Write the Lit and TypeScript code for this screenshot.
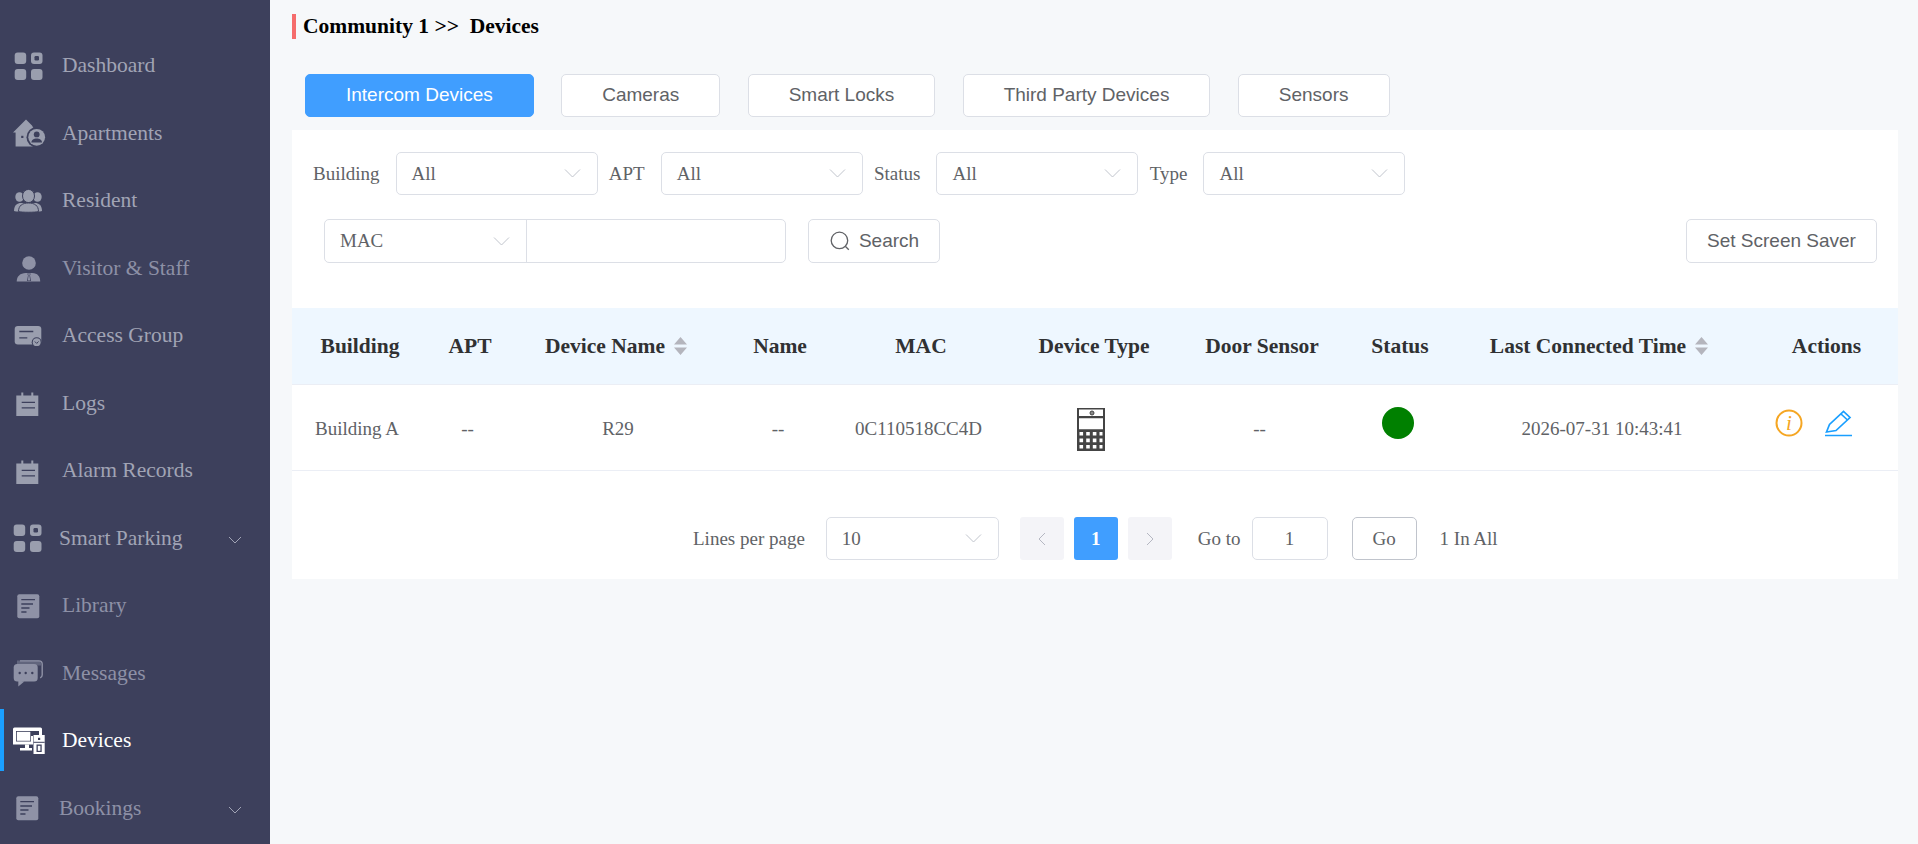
import {css, html, LitElement, svg} from 'lit';
import {customElement} from 'lit/decorators.js';

const BG = '#3d405c';

const grid = svg`<rect x="2.7" y="2.5" width="11.5" height="11.5" rx="3"/><rect x="19" y="2.5" width="11.5" height="11.5" rx="3"/><rect x="22.5" y="6" width="4.5" height="4.5" rx="1.2" fill="${BG}"/><rect x="2.7" y="19" width="11.5" height="11" rx="3"/><rect x="19" y="19" width="11.5" height="11" rx="3"/>`;
const doc = svg`<rect x="5.3" y="4.2" width="22" height="24" rx="2"/><g stroke="${BG}" stroke-width="1.3"><path d="M9.3 9.6H23M9.3 14H21M9.3 18H17.5M9.3 22H14.5"/></g>`;
const cal = svg`<path d="M4.3 8.5h5v-3h2v3h8v-3h2v3h5V29H4.3z"/><g stroke="${BG}" stroke-width="1.3" fill="none"><path d="M9.7 15.3H23M9.7 20.9H23"/></g>`;

const ICONS: Record<string, unknown> = {
    dashboard: grid,
    apartments: svg`<path d="M14 2.6 1 15.6h2.6v14H22V12l-2-3.5z"/><circle cx="24.7" cy="20.3" r="10.2" fill="${BG}"/><circle cx="24.7" cy="20.3" r="8.4"/><circle cx="24.7" cy="17.4" r="2.9" fill="${BG}"/><path d="M19.4 25.6c0-5.4 10.6-5.4 10.6 0z" fill="${BG}"/><rect x="9.2" y="18.8" width="2.2" height="2.2" fill="${BG}"/>`,
    resident: svg`<ellipse cx="7.5" cy="12" rx="4.2" ry="4.8"/><ellipse cx="25.5" cy="12" rx="4.2" ry="4.8"/><path d="M2 26c0-6 3.5-8 7-8h14c3.500 0 7 2 7 8-4 1.200-24 1.200-28 0z"/><ellipse cx="16.5" cy="11" rx="6" ry="6.600" stroke="${BG}"/><path d="M6.500 26.500c0-6 4-8.500 10-8.500s10 2.500 10 8.500c-3 1-17 1-20 0z" stroke="${BG}"/>`,
    visitor: svg`<circle cx="17" cy="11" r="6.800"/><path d="M4.700 29.500c0-5 3.500-8.500 9-8.500h6.500c5.300 0 8 3.500 8 8.500z"/><path d="M15.300 21.500h3.400l-.7 2 1 5.500h-4l1-5.500z" fill="${BG}"/><path d="M16.100 21.800h1.800l-.5 1.800.8 5h-2.400l.8-5z"/>`,
    access: svg`<rect x="2.700" y="5.900" width="26.600" height="18.600" rx="3.200"/><path d="M7.300 11.500h14M7.300 17.900h8" stroke="${BG}" stroke-width="1.300"/><circle cx="24.700" cy="22.200" r="5" fill="${BG}"/><circle cx="24.700" cy="22.200" r="3.900"/><path d="m22.800 21.500 1.900 1.900 1.900-1.900" stroke="${BG}" fill="none"/>`,
    logs: cal,
    parking: grid,
    library: doc,
    messages: svg`<path d="M8 3.900h19a3.200 3.200 0 0 1 3.200 3.200v11a3 3 0 0 1-2 2.800" fill="none" stroke="currentColor" stroke-width="1.400"/><path d="M5 3.500h21.500A3.500 3.500 0 0 1 29 6v2.500H5z" opacity=".45"/><rect x="1.700" y="6.900" width="24" height="17.700" rx="3.500"/><path d="M6.300 23.500v6.100l6-5.100z"/><circle cx="7.700" cy="16" r="1.200" fill="${BG}"/><circle cx="13.700" cy="16" r="1.200" fill="${BG}"/><circle cx="20.300" cy="16" r="1.200" fill="${BG}"/>`,
    devices: svg`<path fill-rule="evenodd" d="M2.500 2.500h26A1.500 1.500 0 0 1 30 4v7h-9v8.500H1V4a1.500 1.500 0 0 1 1.500-1.500zM4 6v10.500h15V11h8V6z"/><rect x="4.800" y="6.800" width="13.500" height="9" /><path d="M13 19.500h4V23h3v2.500H8V23h5z"/><rect x="21.500" y="10" width="11.200" height="19"/><rect x="26" y="12.800" width="2.200" height="2.200" fill="${BG}"/><path d="M21.500 17.300h11.200" stroke="${BG}"/><rect x="24.500" y="19.500" width="5.200" height="7.500" fill="${BG}"/><rect x="25.800" y="20.800" width="2.600" height="5"/>`,
    bookings: doc,
};

interface NavItem {
    id: string;
    label: string;
    tone: string;
    shift?: number;
    open?: boolean;
}

const NAV: NavItem[] = [
    {id: 'dashboard', label: 'Dashboard', tone: 'base'},
    {id: 'apartments', label: 'Apartments', tone: 'base'},
    {id: 'resident', label: 'Resident', tone: 'base'},
    {id: 'visitor', label: 'Visitor & Staff', tone: 'dim'},
    {id: 'access', label: 'Access Group', tone: 'base'},
    {id: 'logs', label: 'Logs', tone: 'base'},
    {id: 'logs', label: 'Alarm Records', tone: 'base'},
    {id: 'parking', label: 'Smart Parking', tone: 'base', shift: 1, open: true},
    {id: 'library', label: 'Library', tone: 'dim'},
    {id: 'messages', label: 'Messages', tone: 'dim'},
    {id: 'devices', label: 'Devices', tone: 'on'},
    {id: 'bookings', label: 'Bookings', tone: 'dim', shift: 1, open: true},
];

const TABS = ['Intercom Devices', 'Cameras', 'Smart Locks', 'Third Party Devices', 'Sensors'];
const FILTERS = ['Building', 'APT', 'Status', 'Type'];

const chevron = html`<svg class="chev" viewBox="0 0 17 9" width="17" height="9"><path d="M1 .5l7.500 7.500 7.500-7.500" fill="none" stroke="currentColor"/></svg>`;
const navChevron = html`<svg class="nchev" viewBox="0 0 14 8" width="14" height="8"><path d="M1 1l6 6 6-6" fill="none" stroke="currentColor"/></svg>`;
const sort = html`<svg class="sort" viewBox="0 0 13 18" width="13" height="18"><path d="M6.500 0 13 7.500H0zM6.500 18 0 10.500h13z" fill="#b4b5bd"/></svg>`;

@customElement('app-root')
export class AppRoot extends LitElement {
    static styles = css`
        :host {
            display: flex;
            height: 100vh;
            overflow: hidden;
            background: #f6f8fa;
            font-family: "Liberation Serif", serif;
            color: #606266;
        }

        .side {
            width: 270px;
            flex: none;
            background: #3d405c;
            padding-top: 32px;
            box-sizing: border-box;
        }

        .item {
            height: 67.5px;
            display: flex;
            align-items: center;
            padding-left: 12px;
            font-size: 21.5px;
            position: relative;
        }

        .item.base { color: #a1a4b5; }
        .item.dim { color: #8d90a6; }
        .item.on { color: #fff; }
        .item.shift { padding-left: 11px; }

        .item.on::before {
            content: '';
            position: absolute;
            left: 0;
            top: 2px;
            width: 4px;
            height: 62px;
            background: #1a9fff;
        }

        .item svg.ico {
            width: 36px;
            height: 32px;
            flex: none;
            margin-right: 14px;
            fill: currentColor;
        }

        .item.base svg.ico { color: #9a9eae; }
        .item.dim svg.ico { color: #8f92a6; }
        .item.shift svg.ico { margin-right: 12px; }

        .nchev {
            position: absolute;
            left: 228px;
            top: 31px;
            color: #a1a4b5;
        }

        main {
            flex: 1;
            padding: 14px 20px 0 22px;
            min-width: 0;
        }

        h1 {
            margin: 0;
            height: 25px;
            line-height: 25px;
            border-left: 4px solid #f56c6c;
            padding-left: 7px;
            font-size: 21.5px;
            font-weight: bold;
            color: #000;
            white-space: pre;
        }

        .tabs {
            display: flex;
            gap: 27.4px;
            margin: 35px 0 13px 13px;
        }

        .btn {
            height: 43px;
            box-sizing: border-box;
            display: flex;
            align-items: center;
            justify-content: center;
            border: 1px solid #dcdfe6;
            border-radius: 5px;
            background: #fff;
            font: 19px "Liberation Sans", sans-serif;
            color: #606266;
        }

        .btn.primary {
            background: #409eff;
            border-color: #409eff;
            color: #fff;
        }

        .tabs .btn { padding: 0 40px 2px; }

        .panel {
            background: #fff;
            height: 449px;
            padding-top: 22px;
            box-sizing: border-box;
        }

        .filters {
            display: flex;
            align-items: center;
            padding-left: 21px;
            font-size: 19px;
        }

        .filters label { margin-right: 16px; }
        .filters .select { margin-right: 11.300px; }

        .select {
            width: 202px;
            height: 43px;
            box-sizing: border-box;
            display: flex;
            align-items: center;
            justify-content: space-between;
            padding: 0 16px 0 15px;
            border: 1px solid #dcdfe6;
            border-radius: 5px;
            background: #fff;
            font-size: 19px;
            color: #606266;
        }

        .chev { color: #c0c4cc; flex: none; }

        .query {
            display: flex;
            align-items: center;
            padding: 0 21px 0 32px;
            margin-top: 24px;
        }

        .combo {
            display: flex;
            width: 462px;
            height: 44px;
            box-sizing: border-box;
            border: 1px solid #dcdfe6;
            border-radius: 5px;
        }

        .combo .select {
            height: 100%;
            border: 0;
            border-right: 1px solid #dcdfe6;
            border-radius: 0;
            background: none;
        }

        .query .btn { height: 44px; }
        .search { width: 132px; margin-left: 22px; gap: 8px; }
        .saver { width: 191px; margin-left: auto; }

        .row {
            display: grid;
            grid-template-columns: 136px 84px 212px 112px 170px 176px 160px 116px 282px 158px;
            align-items: center;
            justify-items: center;
            box-sizing: border-box;
            border-bottom: 1px solid #ebeef5;
        }

        .head {
            margin-top: 45px;
            height: 77px;
            background: #eef7ff;
            font-size: 21.5px;
            font-weight: bold;
            color: #303133;
        }

        .head span { display: flex; align-items: center; gap: 9px; }
        .head .actions { padding-left: 15px; }
        .head .dname { padding-right: 4px; }

        .body {
            height: 86px;
            font-size: 19px;
        }

        .body span { padding-top: 3px; }
        .body .l6 { margin-right: 6px; }
        .body .l5 { margin-right: 5px; }
        .body .l4 { margin-right: 4px; }
        .body .date { margin-left: 6px; }

        .dev { display: block; margin: 3px 7px 0 0; }
        .dot { width: 32px; height: 32px; border-radius: 50%; background: #008000; margin: 0 4px 9px 0; }
        .acts { display: flex; align-items: center; gap: 22px; margin-right: 12px; margin-bottom: 9px; }

        .pager {
            display: flex;
            align-items: center;
            margin: 46px 0 0 401px;
            font-size: 19px;
        }

        .pager .select { width: 173px; margin: 0 21px; }

        .page {
            width: 44px;
            height: 43px;
            display: flex;
            align-items: center;
            justify-content: center;
            background: #f4f4f8;
            border-radius: 3px;
            color: #b5b7c2;
            margin-right: 10px;
        }

        .page.cur { background: #409eff; color: #fff; font-weight: bold; }
        .goto-label { margin-left: 16px; }

        .goto {
            width: 76px;
            height: 43px;
            box-sizing: border-box;
            display: flex;
            align-items: center;
            justify-content: center;
            border: 1px solid #dcdfe6;
            border-radius: 5px;
            margin: 0 24px 0 11px;
        }

        .go {
            width: 65px;
            height: 43px;
            box-sizing: border-box;
            display: flex;
            align-items: center;
            justify-content: center;
            border: 1px solid #c0c4cc;
            border-radius: 5px;
            margin-right: 23px;
        }
    `;

    renderNav(n: NavItem) {
        return html`
            <div class="item ${n.tone} ${n.shift ? 'shift' : ''}">
                <svg class="ico" viewBox="0 0 36 32">${ICONS[n.id]}</svg>
                <span>${n.label}</span>
                ${n.open ? navChevron : ''}
            </div>
        `;
    }

    render() {
        return html`
            <aside class="side">${NAV.map((n) => this.renderNav(n))}</aside>
            <main>
                <h1>Community 1 &gt;&gt;  Devices</h1>
                <div class="tabs">
                    ${TABS.map((t, i) => html`<div class="btn ${i === 0 ? 'primary' : ''}">${t}</div>`)}
                </div>
                <section class="panel">
                    <div class="filters">
                        ${FILTERS.map((f) => html`
                            <label>${f}</label>
                            <div class="select"><span>All</span>${chevron}</div>
                        `)}
                    </div>
                    <div class="query">
                        <div class="combo">
                            <div class="select"><span>MAC</span>${chevron}</div>
                        </div>
                        <div class="btn search">
                            <svg viewBox="0 0 20 20" width="22" height="22"><circle cx="9.500" cy="9.500" r="7.500" fill="none" stroke="#606266" stroke-width="1.200"/><path d="m15 15 3 3" stroke="#606266" stroke-width="1.200"/></svg>
                            Search
                        </div>
                        <div class="btn saver">Set Screen Saver</div>
                    </div>
                    <div class="row head">
                        <span>Building</span>
                        <span>APT</span>
                        <span class="dname">Device Name ${sort}</span>
                        <span>Name</span>
                        <span>MAC</span>
                        <span>Device Type</span>
                        <span>Door Sensor</span>
                        <span>Status</span>
                        <span>Last Connected Time ${sort}</span>
                        <span class="actions">Actions</span>
                    </div>
                    <div class="row body">
                        <span class="l6">Building A</span>
                        <span class="l5">--</span>
                        <span>R29</span>
                        <span class="l4">--</span>
                        <span class="l5">0C110518CC4D</span>
                        <svg class="dev" viewBox="0 0 28 43" width="28" height="43">
                            <path fill="#444" fill-rule="evenodd" d="M0 0h28v43H0zM2 1.500v6.500h24V1.500zM2 10.300v11h24v-11zM2.500 24v3.600h3.600V24zM9.200 24v3.600h3.600V24zM15.800 24v3.600h3.600V24zM22.500 24v3.600h3V24zM2.500 30.600v3.600h3.600v-3.600zM9.200 30.600v3.600h3.600v-3.600zM15.800 30.600v3.600h3.600v-3.600zM22.500 30.600v3.600h3v-3.600zM2.500 37v3.600h3.600V37zM9.200 37v3.600h3.600V37zM15.800 37v3.600h3.600V37zM22.500 37v3.600h3V37z"/>
                            <circle cx="15" cy="5" r="2" fill="#888" stroke="#444"/>
                        </svg>
                        <span class="l5">--</span>
                        <div class="dot"></div>
                        <span class="date">2026-07-31 10:43:41</span>
                        <div class="acts">
                            <svg viewBox="0 0 28 28" width="28" height="28">
                                <circle cx="14" cy="14" r="12.500" fill="none" stroke="#f5a623" stroke-width="2"/>
                                <text x="14" y="20.500" text-anchor="middle" font-size="21" font-style="italic" fill="#f5a623" font-family="Liberation Serif">i</text>
                            </svg>
                            <svg viewBox="0 0 27 27" width="27" height="27">
                                <path d="M1.500 22 4.500 14.500 18.500 1.500 25 7.500 11 20.500z" fill="none" stroke="#1a9fff" stroke-width="1.700"/>
                                <path d="M16 4l6.500 6M0 25.500h27" fill="none" stroke="#1a9fff" stroke-width="1.700"/>
                            </svg>
                        </div>
                    </div>
                    <div class="pager">
                        <span>Lines per page</span>
                        <div class="select"><span>10</span>${chevron}</div>
                        <div class="page"><svg viewBox="0 0 8 14" width="8" height="14"><path d="M7 1 1 7l6 6" fill="none" stroke="currentColor"/></svg></div>
                        <div class="page cur">1</div>
                        <div class="page"><svg viewBox="0 0 8 14" width="8" height="14"><path d="m1 1 6 6-6 6" fill="none" stroke="currentColor"/></svg></div>
                        <span class="goto-label">Go to</span>
                        <div class="goto">1</div>
                        <div class="go">Go</div>
                        <span>1 In All</span>
                    </div>
                </section>
            </main>
        `;
    }
}
